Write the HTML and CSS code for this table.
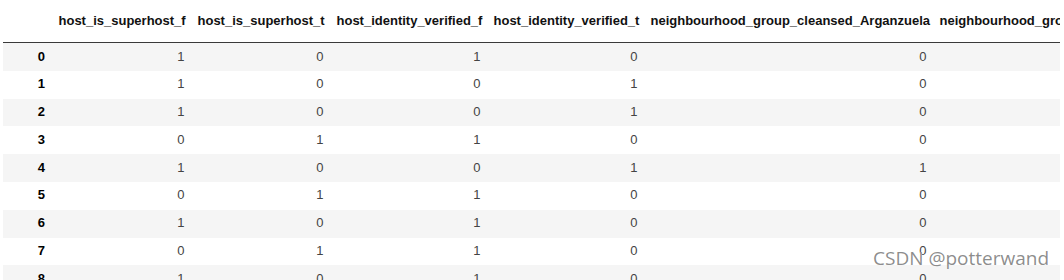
FILE: index.html
```html
<!DOCTYPE html>
<html>
<head>
<meta charset="utf-8">
<link rel="stylesheet" href="styles.css">
</head>
<body>
<div class="frame">
  <table class="df">
    <colgroup>
      <col class="c-idx"><col class="c1"><col class="c2"><col class="c3"><col class="c4"><col class="c5"><col class="c6">
    </colgroup>
    <thead>
      <tr>
        <th></th>
        <th>host_is_superhost_f</th>
        <th>host_is_superhost_t</th>
        <th>host_identity_verified_f</th>
        <th>host_identity_verified_t</th>
        <th>neighbourhood_group_cleansed_Arganzuela</th>
        <th class="left">neighbourhood_group_cleansed_Barajas</th>
      </tr>
    </thead>
    <tbody>
      <tr><th>0</th><td>1</td><td>0</td><td>1</td><td>0</td><td>0</td><td></td></tr>
      <tr><th>1</th><td>1</td><td>0</td><td>0</td><td>1</td><td>0</td><td></td></tr>
      <tr><th>2</th><td>1</td><td>0</td><td>0</td><td>1</td><td>0</td><td></td></tr>
      <tr><th>3</th><td>0</td><td>1</td><td>1</td><td>0</td><td>0</td><td></td></tr>
      <tr><th>4</th><td>1</td><td>0</td><td>0</td><td>1</td><td>1</td><td></td></tr>
      <tr><th>5</th><td>0</td><td>1</td><td>1</td><td>0</td><td>0</td><td></td></tr>
      <tr><th>6</th><td>1</td><td>0</td><td>1</td><td>0</td><td>0</td><td></td></tr>
      <tr><th>7</th><td>0</td><td>1</td><td>1</td><td>0</td><td>0</td><td></td></tr>
      <tr><th>8</th><td>1</td><td>0</td><td>1</td><td>0</td><td>0</td><td></td></tr>
    </tbody>
  </table>
  <div class="watermark">CSDN @potterwand</div>
</div>
</body>
</html>
```

FILE: styles.css
```css
html, body {
  margin: 0;
  padding: 0;
  background: #ffffff;
  overflow: hidden;
}

.frame {
  position: relative;
  width: 1064px;
  height: 280px;
  padding-left: 3px;
  box-sizing: border-box;
  overflow: hidden;
}

.df {
  width: 1057px;
  table-layout: fixed;
  border-collapse: collapse;
  font-family: "Liberation Sans", Arial, sans-serif;
  font-size: 13px;
  line-height: 15px;
}

.c-idx { width: 49px; }
.c1 { width: 139px; }
.c2 { width: 139px; }
.c3 { width: 157px; }
.c4 { width: 157px; }
.c5 { width: 289px; }
.c6 { width: 127px; }

.df th,
.df td {
  white-space: nowrap;
  overflow: visible;
  text-align: right;
  vertical-align: middle;
}

.df thead th {
  font-weight: bold;
  color: #111;
  padding: 13px 6.5px 14px 6.5px;
  border-bottom: 1px solid #3a3a3a;
}

.df thead th.left {
  text-align: left;
  overflow: hidden;
}

.df tbody th {
  font-weight: bold;
  color: #000;
  padding: 5.5px 7px 7.3px 6.5px;
}

.df tbody td {
  color: #444;
  padding: 5.5px 6.5px 7.3px 6.5px;
}

.df tbody tr:nth-child(odd) {
  background: #f5f5f5;
}

.watermark {
  position: absolute;
  left: 873px;
  top: 246px;
  font-family: "Open Sans", "Noto Sans", sans-serif;
  font-size: 19px;
  line-height: 24px;
  color: rgba(120, 120, 120, 0.85);
  text-shadow: 0 0 1px #fff;
  white-space: nowrap;
}
```
